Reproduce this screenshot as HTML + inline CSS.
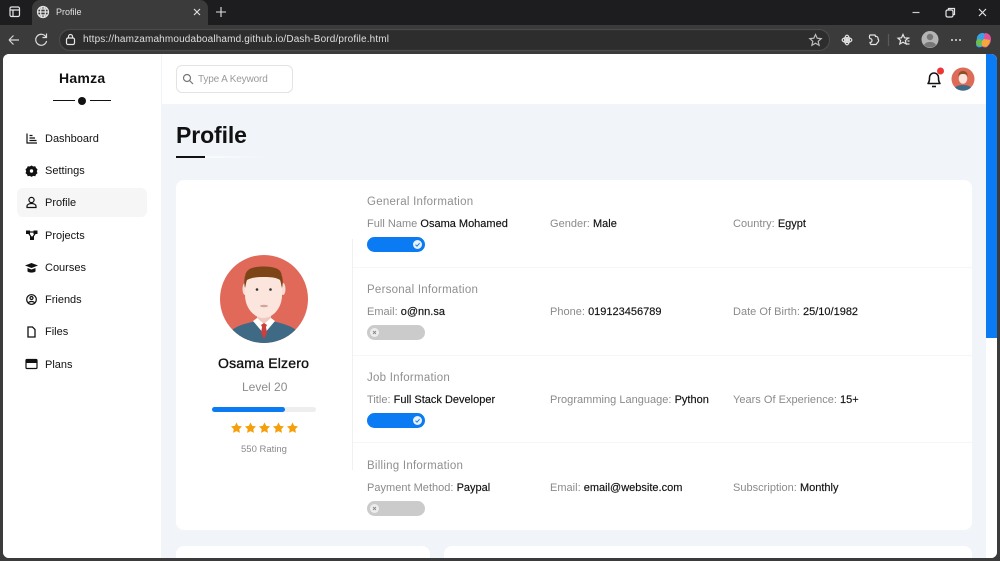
<!DOCTYPE html>
<html><head><meta charset="utf-8"><title>Profile</title>
<style>
*{box-sizing:border-box;margin:0;padding:0}
html,body{width:1000px;height:561px;overflow:hidden;background:#3b3b3b;font-family:"Liberation Sans",sans-serif}
.a{position:absolute;white-space:nowrap}
svg{position:absolute;overflow:visible}
.nav{left:45px;font-size:11px;color:#111;letter-spacing:0;line-height:14px}
.t{font-size:11px;line-height:14px;color:#8a8a8a;letter-spacing:.02px}
.t b{font-weight:normal;color:#111;letter-spacing:0;-webkit-text-stroke:.15px #111}
.h{font-size:11.5px;line-height:14px;color:#8f8f8f;letter-spacing:.25px;left:367px}
.on,.off{position:absolute;left:367px;width:58px;height:15px;border-radius:8px}
.on{background:#0a7bf2}.off{background:#cbcbcb}
.on svg,.off svg{top:3px;width:9px;height:9px}
.on svg{right:3px}.off svg{left:3px}
.sep{position:absolute;left:353px;width:619px;height:1px;background:#f6f6f6}
</style></head><body>
<!-- browser chrome -->
<div class="a" style="left:0;top:0;width:1000px;height:25px;background:#1d1d1f"></div>
<div class="a" style="left:32px;top:0;width:176px;height:25px;background:#3b3b3b;border-radius:8px 8px 0 0"></div>
<div class="a" style="left:0;top:25px;width:1000px;height:30px;background:#3b3b3b"></div>
<svg style="left:0;top:0" width="1000" height="55" fill="none" stroke="#e4e4e4" stroke-width="1.2">
<rect x="10" y="7" width="9.5" height="9.5" rx="1.5"/><path d="M10 10h9.5M13 10v6.5"/>
<circle cx="43" cy="12" r="5.5"/><ellipse cx="43" cy="12" rx="2.4" ry="5.5"/><path d="M37.5 12h11M38.5 9h9M38.5 15h9"/>
<path d="M194 9l6 6M200 9l-6 6" stroke="#ddd"/>
<path d="M221 7v10M216 12h10" stroke-width="1.1"/>
<path d="M9 40h10M9 40l4.5-4.5M9 40l4.5 4.5" stroke="#d5d5d5"/>
<path d="M46 37a5.5 5.5 0 1 0 .6 4M46.5 33.5V37.5H42.5" stroke="#ddd"/>
<rect x="59.500" y="29.500" width="770" height="21" rx="10.500" fill="#2d2d2d" stroke="#4a4a4a"/>
<rect x="66.500" y="38" width="8" height="6.500" rx="1.500"/><path d="M68.500 38v-1.500a2 2 0 0 1 4 0V38"/>
<path d="M815.500 34.500l1.700 3.700 4 .4-3 2.700.9 4-3.600-2.100-3.600 2.100.9-4-3-2.700 4-.4z" stroke="#bbb"/>
<circle cx="847" cy="40" r="2" fill="#ddd" stroke="none"/><ellipse cx="847" cy="40" rx="4.800" ry="2.400"/><ellipse cx="847" cy="40" rx="2.400" ry="4.800"/>
<path d="M870 35h5l.5 1.500a2 2 0 0 1 2.500 2.500 2 2 0 0 1 0 3l-2 2.500h-5a3 3 0 0 1-1-2 2 2 0 0 0 0-4 3 3 0 0 1 0-3.500z"/>
<path d="M888.500 34v12" stroke="#5a5a5a"/>
<path d="M903 34.500l1.500 3.300 3.500.4-2.600 2.300.8 3.500-3.200-1.800-3.200 1.800.8-3.500-2.600-2.300 3.500-.4zM907 38h2.500M907.500 41h2M906.500 44h3"/>
<circle cx="930" cy="39.500" r="8.500" fill="#b4b4b4" stroke="none"/><circle cx="930" cy="37" r="3.200" fill="#777" stroke="none"/><path d="M924 45a6.500 5 0 0 1 12 0 8.500 8.500 0 0 1-12 0z" fill="#777" stroke="none"/>
<circle cx="952" cy="40" r="1" fill="#ddd" stroke="none"/><circle cx="956" cy="40" r="1" fill="#ddd" stroke="none"/><circle cx="960" cy="40" r="1" fill="#ddd" stroke="none"/>
<path d="M977 37c2-5 8-5 9-2l-3 11c-2 2-6 2-7-1z" fill="#3aa0e8" stroke="none"/><path d="M985 33c3 0 6 2 6 6 0 3-1 5-3 7-1 2-5 2-6 0z" fill="#e0539a" stroke="none"/><path d="M982 46c-1-3 0-6 2-7l6 1c0 3-2 6-4 7z" fill="#f3a83a" stroke="none"/><path d="M976 42c0-2 2-3 4-3l2 2-1 5c-2 1-5-1-5-4z" fill="#6cc04a" stroke="none"/>
<path d="M912.500 12.500h7" stroke="#ccc"/>
<rect x="946" y="10" width="7" height="7" rx="1.500"/><path d="M948.500 10V8.500h6v6H953"/>
<path d="M979 9l7 7M986 9l-7 7"/>
</svg>
<div class="a" style="left:56px;top:6px;font-size:9px;line-height:12px;color:#e2e2e2;letter-spacing:0">Profile</div>
<div class="a" style="left:83px;top:33px;font-size:10px;line-height:14px;color:#dfdfdf;letter-spacing:.15px">https://hamzamahmoudaboalhamd.github.io/Dash-Bord/profile.html</div>

<!-- page -->
<div class="a" style="left:3px;top:54px;width:994px;height:504px;background:#f1f5f9;border-radius:6px 6px 6px 6px;overflow:hidden">
  <div class="a" style="left:983px;top:0;width:11px;height:504px;background:#fff"></div>
  <div class="a" style="left:983px;top:0;width:11px;height:284px;background:#0a7bf2"></div>
  <div class="a" style="left:159px;top:0;width:824px;height:50px;background:#fff"></div>
  <div class="a" style="left:0;top:0;width:158px;height:504px;background:#fff"></div>
  <div class="a" style="left:173px;top:126px;width:796px;height:350px;background:#fff;border-radius:8px"></div>
  <div class="a" style="left:173px;top:492px;width:254px;height:20px;background:#fff;border-radius:8px"></div>
  <div class="a" style="left:441px;top:492px;width:528px;height:20px;background:#fff;border-radius:8px"></div>
  <div class="a" style="left:14px;top:134px;width:130px;height:29px;background:#f6f6f6;border-radius:6px"></div>
</div>

<!-- logo -->
<div class="a" style="left:59px;top:70px;font-size:14px;line-height:17px;color:#111;font-weight:bold;letter-spacing:.25px">Hamza</div>
<div class="a" style="left:53px;top:100px;width:22px;height:1px;background:#111"></div>
<div class="a" style="left:78px;top:97px;width:8px;height:8px;border-radius:50%;background:#111"></div>
<div class="a" style="left:90px;top:100px;width:21px;height:1px;background:#111"></div>

<!-- nav icons -->
<svg style="left:0;top:0" width="170" height="380" fill="none" stroke="#111" stroke-width="1.2">
<path d="M27 133.500v9.500h10M29.500 135.500h3M29.500 138h5.500M29.500 140.500h7"/>
<path d="M31.500 165.500l1.800 1 2-.3.700 1.800 1.500 1.200-.700 2 .7 2-1.500 1.200-.7 1.800-2-.3-1.800 1-1.800-1-2 .3-.7-1.800-1.500-1.200.7-2-.7-2 1.500-1.200.7-1.800 2 .3z" fill="#111" stroke="none"/><circle cx="31.500" cy="171" r="1.700" fill="#fff" stroke="none"/>
<circle cx="31.500" cy="200" r="2.600"/><path d="M27 207.500v-1.300c0-1.500 2-2.700 4.500-2.700s4.500 1.200 4.500 2.700v1.300z"/>
<g fill="#111" stroke="none"><rect x="26" y="230.500" width="4" height="3.500"/><rect x="33.500" y="230.500" width="4" height="3.500"/><rect x="30" y="236.500" width="4" height="3.500"/></g><path d="M28 232h8M28.500 233l3 4.500M35.500 233l-3 4.500" stroke-width="1.200"/>
<path d="M25 265.500l6.500-2.500 6.500 2.500-6.500 2.500z" fill="#111" stroke="none"/><path d="M27.500 268v3.500c2.500 1.500 5.500 1.500 8 0v-3.500l-4 1.500z" fill="#111" stroke="none"/>
<circle cx="31.500" cy="299.500" r="4.800"/><circle cx="31.500" cy="298" r="1.500"/><path d="M28.500 303c.5-2 5.500-2 6 0"/>
<path d="M28 327h4.500l2.500 2.500v7.500h-7z" stroke-width="1.300"/>
<rect x="26" y="359.500" width="11" height="9" rx="1"/><rect x="26" y="360" width="11" height="3" fill="#111" stroke="none"/>
</svg>
<div class="a nav" style="top:132px">Dashboard</div>
<div class="a nav" style="top:164px">Settings</div>
<div class="a nav" style="top:196px">Profile</div>
<div class="a nav" style="top:229px">Projects</div>
<div class="a nav" style="top:261px">Courses</div>
<div class="a nav" style="top:293px">Friends</div>
<div class="a nav" style="top:325px">Files</div>
<div class="a nav" style="top:358px">Plans</div>

<!-- search -->
<div class="a" style="left:176px;top:65px;width:117px;height:28px;border:1px solid #e3e3e3;border-radius:6px;background:#fff"></div>
<svg style="left:0;top:0" width="200" height="90" fill="none" stroke="#777" stroke-width="1.2"><circle cx="187" cy="78" r="3.500"/><path d="M189.500 80.500l3.500 3.500"/></svg>
<div class="a" style="left:198px;top:73px;font-size:10px;line-height:13px;color:#9a9a9a;letter-spacing:-.15px">Type A Keyword</div>

<!-- header right -->
<svg style="left:0;top:0" width="1000" height="100" fill="none" stroke="#111" stroke-width="1.500">
<path d="M928 83.500c1.500-2 1.500-3.500 1.500-6a4.500 4.500 0 0 1 9 0c0 2.500 0 4 1.500 6z" stroke-linejoin="round"/><path d="M932 86.500h4" stroke-width="1.600"/>
<circle cx="940.500" cy="71" r="3.500" fill="#ee3535" stroke="none"/>
<circle cx="963" cy="79" r="11.500" fill="#dd6b58" stroke="none"/>
<path d="M955 87.500c2-2 5-2.500 8-2.500s6 .5 8 2.500a11.500 11.500 0 0 1-16 0z" fill="#3f6a85" stroke="none"/>
<ellipse cx="963" cy="78.500" rx="4.300" ry="5.300" fill="#fbe3da" stroke="none"/>
<path d="M958.500 77c-.5-4 1.500-6 4.500-6s5 2 4.500 6c-.5-2-1.500-3-4.500-3s-4 1-4.500 3z" fill="#8a4f26" stroke="none"/>
</svg>

<!-- title -->
<div class="a" style="left:176px;top:120px;font-size:23px;line-height:30px;color:#111;font-weight:bold;letter-spacing:-.1px">Profile</div>
<div class="a" style="left:176px;top:156px;width:29px;height:2px;background:#111"></div>
<div class="a" style="left:205px;top:156px;width:65px;height:2px;background:linear-gradient(90deg,#fafbfd,#f1f5f9)"></div>

<!-- avatar -->
<svg style="left:220px;top:255px" width="88" height="88" viewBox="0 0 88 88">
<defs><clipPath id="c"><circle cx="44" cy="44" r="44"/></clipPath></defs>
<circle cx="44" cy="44" r="44" fill="#e0695a"/>
<g clip-path="url(#c)">
<path d="M12 75c6-5 16-7 24-9h16c8 2 18 4 24 9v15H12z" fill="#3f6a85"/>
<path d="M33 66l4-3h14l4 3-11 13z" fill="#fff"/>
<path d="M37 58h14v5l-7 6-7-6z" fill="#edc9bf"/>
<path d="M41 70l3-2 3 2-1 2 1 6-3 6-3-6 1-6z" fill="#c9403c"/>
<ellipse cx="25" cy="34" rx="2.500" ry="6" fill="#f7dcd3"/><ellipse cx="63" cy="34" rx="2.500" ry="6" fill="#f7dcd3"/>
<path d="M25 20h37v20c0 13-9 23-18.500 23S25 53 25 40z" fill="#fbe5dd"/>
<path d="M25 33c-1-4-1-8 0-12 1-5 4-7 7-8 6-2 18-2 23 0 4 1 6 3 7 8 1 4 1 8 0 12-1-3-1-6-2-8-3-2-7-3-16-3s-13 1-17 3c-1 2-1 5-2 8z" fill="#7d4418"/>
<circle cx="37" cy="34.500" r="1.300" fill="#333"/><circle cx="50.500" cy="34.500" r="1.300" fill="#333"/>
<ellipse cx="44" cy="51" rx="4" ry="1.200" fill="#cfa69c"/>
</g>
</svg>

<div class="a" style="left:218px;top:355px;font-size:14px;line-height:17px;color:#111;letter-spacing:.2px;-webkit-text-stroke:.35px #111">Osama Elzero</div>
<div class="a" style="left:242px;top:380px;font-size:12px;line-height:15px;color:#8c8c8c;letter-spacing:0">Level 20</div>
<div class="a" style="left:212px;top:407px;width:104px;height:5px;background:#eeeeee;border-radius:3px"></div>
<div class="a" style="left:212px;top:407px;width:73px;height:5px;background:#0a7bf2;border-radius:3px"></div>
<svg style="left:230px;top:421px" width="70" height="14" fill="#f59f0a">
<path d="M6.500 1.500l1.700 3.400 3.800.5-2.700 2.700.6 3.800-3.400-1.800-3.400 1.800.6-3.800L1 5.400l3.800-.5z"/>
<path transform="translate(14)" d="M6.500 1.500l1.700 3.400 3.800.5-2.700 2.700.6 3.800-3.400-1.800-3.400 1.800.6-3.800L1 5.400l3.800-.5z"/>
<path transform="translate(28)" d="M6.500 1.500l1.700 3.400 3.800.5-2.700 2.700.6 3.800-3.400-1.800-3.400 1.800.6-3.800L1 5.400l3.800-.5z"/>
<path transform="translate(42)" d="M6.500 1.500l1.700 3.400 3.800.5-2.700 2.700.6 3.800-3.400-1.800-3.400 1.800.6-3.800L1 5.400l3.800-.5z"/>
<path transform="translate(56)" d="M6.500 1.500l1.700 3.400 3.800.5-2.700 2.700.6 3.800-3.400-1.800-3.400 1.800.6-3.800L1 5.400l3.800-.5z"/>
</svg>
<div class="a" style="left:241px;top:443px;font-size:9.500px;line-height:13px;color:#8a8a8a;letter-spacing:0">550 Rating</div>

<!-- info -->
<div class="a" style="left:352px;top:239px;width:1px;height:231px;background:#f0f0f0"></div>
<div class="sep" style="top:267px"></div>
<div class="sep" style="top:355px"></div>
<div class="sep" style="top:442px"></div>

<div class="a h" style="top:195px">General Information</div>
<div class="a t" style="left:367px;top:217px">Full Name <b>Osama Mohamed</b></div>
<div class="a t" style="left:550px;top:217px">Gender: <b>Male</b></div>
<div class="a t" style="left:733px;top:217px">Country: <b>Egypt</b></div>
<div class="on" style="top:237px"><svg viewBox="0 0 9 9"><circle cx="4.500" cy="4.500" r="4.500" fill="#e9f1fb"/><path d="M2.500 4.700l1.500 1.500 2.600-3" fill="none" stroke="#0a7bf2" stroke-width="1"/></svg></div>

<div class="a h" style="top:283px">Personal Information</div>
<div class="a t" style="left:367px;top:305px">Email: <b>o@nn.sa</b></div>
<div class="a t" style="left:550px;top:305px">Phone: <b>019123456789</b></div>
<div class="a t" style="left:733px;top:305px">Date Of Birth: <b>25/10/1982</b></div>
<div class="off" style="top:325px"><svg viewBox="0 0 9 9"><circle cx="4.500" cy="4.500" r="4.500" fill="#eee"/><path d="M3 3l3 3M6 3l-3 3" fill="none" stroke="#888" stroke-width=".9"/></svg></div>

<div class="a h" style="top:371px">Job Information</div>
<div class="a t" style="left:367px;top:393px">Title: <b>Full Stack Developer</b></div>
<div class="a t" style="left:550px;top:393px">Programming Language: <b>Python</b></div>
<div class="a t" style="left:733px;top:393px">Years Of Experience: <b>15+</b></div>
<div class="on" style="top:413px"><svg viewBox="0 0 9 9"><circle cx="4.500" cy="4.500" r="4.500" fill="#e9f1fb"/><path d="M2.500 4.700l1.500 1.500 2.600-3" fill="none" stroke="#0a7bf2" stroke-width="1"/></svg></div>

<div class="a h" style="top:459px">Billing Information</div>
<div class="a t" style="left:367px;top:481px">Payment Method: <b>Paypal</b></div>
<div class="a t" style="left:550px;top:481px">Email: <b>email@website.com</b></div>
<div class="a t" style="left:733px;top:481px">Subscription: <b>Monthly</b></div>
<div class="off" style="top:501px"><svg viewBox="0 0 9 9"><circle cx="4.500" cy="4.500" r="4.500" fill="#eee"/><path d="M3 3l3 3M6 3l-3 3" fill="none" stroke="#888" stroke-width=".9"/></svg></div>
</body></html>
